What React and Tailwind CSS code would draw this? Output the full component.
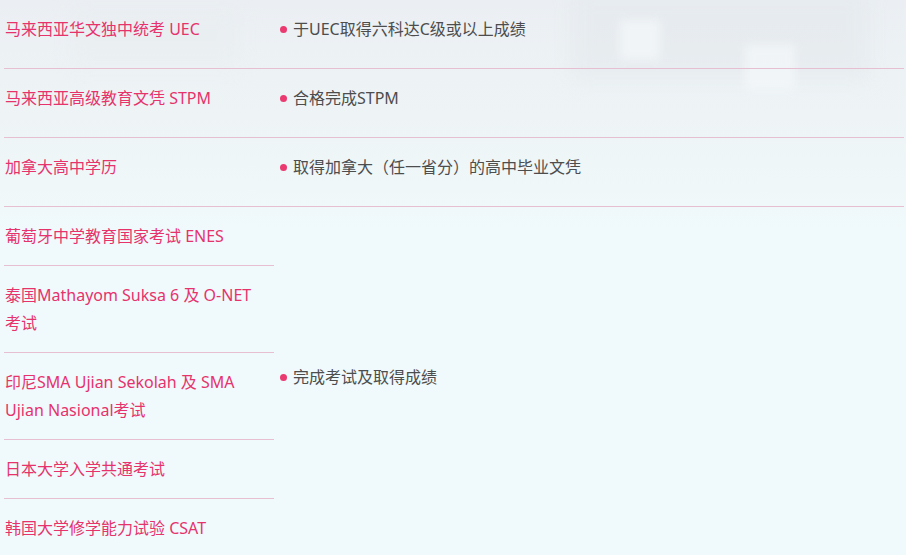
const rows = [
  { left: "马来西亚华文独中统考 UEC", right: "于UEC取得六科达C级或以上成绩" },
  { left: "马来西亚高级教育文凭 STPM", right: "合格完成STPM" },
  { left: "加拿大高中学历", right: "取得加拿大（任一省分）的高中毕业文凭" },
];

const group = [
  ["葡萄牙中学教育国家考试 ENES"],
  ["泰国Mathayom Suksa 6 及 O-NET", "考试"],
  ["印尼SMA Ujian Sekolah 及 SMA", "Ujian Nasional考试"],
  ["日本大学入学共通考试"],
  ["韩国大学修学能力试验 CSAT"],
];

function Bullet({ children }) {
  return (
    <div className="flex items-center gap-[6px] pl-[6px] mb-[10px] leading-[28px] text-[#4d4d4d]">
      <span className="w-[7px] h-[7px] rounded-full bg-[#ea3a70] shrink-0" />
      <span>{children}</span>
    </div>
  );
}

export default function App() {
  return (
    <div
      className="relative w-[906px] h-[555px] overflow-hidden bg-[#f0f9fb] text-[16px]"
      style={{ fontFamily: '"Noto Sans", "Noto Sans CJK SC", sans-serif' }}
    >
      {/* faded photo behind the top rows */}
      <div className="absolute inset-x-0 top-0 h-[230px] bg-gradient-to-b from-[#ebeff3] via-[#eef4f6] to-[#f0f9fb]" />
      <div className="absolute left-[570px] top-[-10px] w-[300px] h-[90px] bg-[#e4e9ed] blur-[10px] opacity-60" />
      <div className="absolute left-[620px] top-[20px] w-[40px] h-[40px] bg-[#f3f7f9] blur-[4px] opacity-80" />
      <div className="absolute left-[745px] top-[45px] w-[50px] h-[45px] bg-[#f3f7f9] blur-[4px] opacity-80" />
      <div className="absolute left-[70px] top-[5px] w-[170px] h-[60px] bg-[#e8edf0] blur-[10px] opacity-50" />

      <div className="relative pl-[4px] pr-[2px]">
        {rows.map((r) => (
          <div key={r.left} className="flex border-b border-[#e6bfd0]">
            <div className="w-[270px] shrink-0 pl-[1px] pt-[15px] pb-[25px] leading-[28px] text-[#e6336c]">
              {r.left}
            </div>
            <div className="flex-1 pt-[15px] pb-[15px]">
              <Bullet>{r.right}</Bullet>
            </div>
          </div>
        ))}

        <div className="flex">
          <div className="w-[270px] shrink-0 flex flex-col">
            {group.map((g, i) => (
              <div
                key={g[0]}
                className={`pl-[1px] py-[15px] leading-[28px] text-[#e6336c] ${
                  i < group.length - 1 ? "border-b border-[#e6bfd0]" : ""
                }`}
              >
                {g.map((line) => (
                  <div key={line}>{line}</div>
                ))}
              </div>
            ))}
          </div>
          <div className="flex-1 flex items-center">
            <Bullet>完成考试及取得成绩</Bullet>
          </div>
        </div>
      </div>
    </div>
  );
}
